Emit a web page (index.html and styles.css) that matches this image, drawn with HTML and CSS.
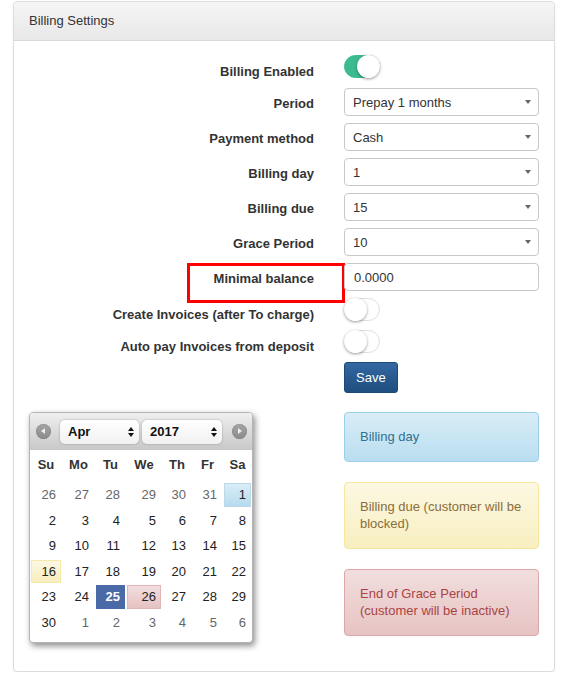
FILE: index.html
```html
<!DOCTYPE html>
<html>
<head>
<meta charset="utf-8">
<link rel="stylesheet" href="styles.css">
</head>
<body>
<div class="panel">
  <div class="panel-heading">Billing Settings</div>
  <div class="panel-body">
    <div class="form">
      <div class="row row-toggle first">
        <div class="label">Billing Enabled</div>
        <div class="ctrl"><span class="switch on"><span class="knob"></span></span></div>
      </div>
      <div class="row">
        <div class="label">Period</div>
        <div class="ctrl"><div class="select">Prepay 1 months<span class="caret"></span></div></div>
      </div>
      <div class="row">
        <div class="label">Payment method</div>
        <div class="ctrl"><div class="select">Cash<span class="caret"></span></div></div>
      </div>
      <div class="row">
        <div class="label">Billing day</div>
        <div class="ctrl"><div class="select">1<span class="caret"></span></div></div>
      </div>
      <div class="row">
        <div class="label">Billing due</div>
        <div class="ctrl"><div class="select">15<span class="caret"></span></div></div>
      </div>
      <div class="row">
        <div class="label">Grace Period</div>
        <div class="ctrl"><div class="select">10<span class="caret"></span></div></div>
      </div>
      <div class="row">
        <div class="label marked">Minimal balance</div>
        <div class="ctrl"><div class="input">0.0000</div></div>
      </div>
      <div class="row row-toggle tight">
        <div class="label">Create Invoices (after To charge)</div>
        <div class="ctrl"><span class="switch"><span class="knob"></span></span></div>
      </div>
      <div class="row row-toggle tight">
        <div class="label">Auto pay Invoices from deposit</div>
        <div class="ctrl"><span class="switch"><span class="knob"></span></span></div>
      </div>
      <div class="row row-btn">
        <div></div>
        <div class="ctrl"><span class="btn">Save</span></div>
      </div>
    </div>

    <div class="bottom">
      <div class="cal">
        <div class="cal-head">
          <span class="nav prev"></span>
          <span class="csel month">Apr<span class="updown"><svg width="6" height="10" viewBox="0 0 6 10"><path d="M3 0 L6 4 L0 4 Z M0 6 L6 6 L3 10 Z" fill="#111"/></svg></span></span>
          <span class="csel year">2017<span class="updown"><svg width="6" height="10" viewBox="0 0 6 10"><path d="M3 0 L6 4 L0 4 Z M0 6 L6 6 L3 10 Z" fill="#111"/></svg></span></span>
          <span class="nav next"></span>
        </div>
        <table class="cal-table">
          <colgroup>
            <col class="c32"><col class="c33"><col class="c31"><col class="c36"><col class="c30"><col class="c31"><col class="c29">
          </colgroup>
          <thead>
            <tr><th>Su</th><th>Mo</th><th>Tu</th><th>We</th><th>Th</th><th>Fr</th><th>Sa</th></tr>
          </thead>
          <tbody>
            <tr><td><a class="other">26</a></td><td><a class="other">27</a></td><td><a class="other">28</a></td><td><a class="other">29</a></td><td><a class="other">30</a></td><td><a class="other">31</a></td><td><a class="hl-blue">1</a></td></tr>
            <tr><td><a>2</a></td><td><a>3</a></td><td><a>4</a></td><td><a>5</a></td><td><a>6</a></td><td><a>7</a></td><td><a>8</a></td></tr>
            <tr><td><a>9</a></td><td><a>10</a></td><td><a>11</a></td><td><a>12</a></td><td><a>13</a></td><td><a>14</a></td><td><a>15</a></td></tr>
            <tr><td><a class="hl-yellow">16</a></td><td><a>17</a></td><td><a>18</a></td><td><a>19</a></td><td><a>20</a></td><td><a>21</a></td><td><a>22</a></td></tr>
            <tr><td><a>23</a></td><td><a>24</a></td><td><a class="hl-sel">25</a></td><td><a class="hl-red">26</a></td><td><a>27</a></td><td><a>28</a></td><td><a>29</a></td></tr>
            <tr><td><a>30</a></td><td><a class="other">1</a></td><td><a class="other">2</a></td><td><a class="other">3</a></td><td><a class="other">4</a></td><td><a class="other">5</a></td><td><a class="other">6</a></td></tr>
          </tbody>
        </table>
      </div>
      <div class="legend">
        <div class="alert info">Billing day</div>
        <div class="alert warning">Billing due (customer will be<br>blocked)</div>
        <div class="alert danger">End of Grace Period<br>(customer will be inactive)</div>
      </div>
    </div>
  </div>
</div>
</body>
</html>
```
FILE: styles.css
```css
* { box-sizing: border-box; }
html, body { margin: 0; padding: 0; background: #fff; }
body {
  font-family: "Liberation Sans", Arial, Helvetica, sans-serif;
  font-size: 13px;
  color: #333;
}
.panel {
  margin: 1px 6px 0 13px;
  border: 1px solid #dcdcdc;
  border-radius: 4px;
  box-shadow: 0 1px 2px rgba(0,0,0,.05);
  background: #fff;
}
.panel-heading {
  padding: 9px 15px;
  line-height: 20px;
  font-size: 13px;
  color: #333;
  background: linear-gradient(#f5f5f5, #e8e8e8);
  border-bottom: 1px solid #d8d8d8;
  border-radius: 3px 3px 0 0;
}
.panel-body {
  padding: 14px 15px 16px 15px;
}
.row {
  display: grid;
  grid-template-columns: 285px 1fr;
  column-gap: 30px;
  align-items: center;
  margin-bottom: 7px;
}
.row.first { margin-bottom: 6px; }
.row.tight { margin-bottom: 5px; }
.label {
  text-align: right;
  font-weight: bold;
  line-height: 20px;
  padding-top: 3px;
  color: #333;
  position: relative;
}
.row-toggle { align-items: start; }
.row-toggle .label { padding-top: 7px; }
.label.marked::after {
  content: "";
  position: absolute;
  left: 158px;
  top: -3px;
  width: 152px;
  height: 34px;
  border: 3px solid #ff0000;
}
.select, .input {
  position: relative;
  height: 28px;
  border: 1px solid #c8c8c8;
  border-radius: 4px;
  padding: 0 8px;
  line-height: 27px;
  font-size: 13px;
  color: #333;
  background: #fff;
}
.input { padding-left: 9px; }
.caret {
  position: absolute;
  right: 7px;
  top: 11px;
  width: 0; height: 0;
  border-left: 3.5px solid transparent;
  border-right: 3.5px solid transparent;
  border-top: 4px solid #666;
}
.switch {
  position: relative;
  display: block;
  width: 36px;
  height: 23px;
  border: 1px solid #dfdfdf;
  border-radius: 12px;
  background: #fff;
}
.switch .knob {
  position: absolute;
  top: -1px;
  left: -1px;
  width: 23px;
  height: 23px;
  border-radius: 50%;
  background: #fff;
  box-shadow: 0 1px 3px rgba(0,0,0,.4);
}
.switch.on {
  background: #3cbb92;
  border-color: #3cbb92;
}
.switch.on .knob { left: auto; right: -1px; }
.row-btn { margin-bottom: 0; }
.btn {
  display: inline-block;
  height: 31px;
  line-height: 29px;
  padding: 0 11px;
  color: #fff;
  font-size: 13px;
  border: 1px solid #1e4a78;
  border-radius: 3px;
  background: linear-gradient(#3268a2, #1f4d7e);
}
.bottom {
  display: grid;
  grid-template-columns: 285px 1fr;
  column-gap: 30px;
  align-items: start;
  margin-top: 19px;
}
.cal {
  width: 224px;
  border: 1px solid #b5b5b5;
  border-radius: 4px;
  background: #fff;
  box-shadow: 2px 3px 6px rgba(0,0,0,.45);
  padding-bottom: 6px;
}
.cal-head {
  display: flex;
  align-items: center;
  height: 37px;
  padding-left: 6px;
  background: linear-gradient(#efefef, #c8c8c8);
  border-radius: 3px 3px 0 0;
}
.nav {
  position: relative;
  width: 15px;
  height: 15px;
  border-radius: 50%;
  background: linear-gradient(#a5a5a5, #8a8a8a);
  box-shadow: inset 0 0 1px rgba(0,0,0,.4);
  flex: none;
}
.nav::after {
  content: "";
  position: absolute;
  top: 4px;
  width: 0; height: 0;
  border-top: 3.5px solid transparent;
  border-bottom: 3.5px solid transparent;
}
.nav.prev::after { left: 5px; border-right: 4px solid #eee; }
.nav.next::after { left: 6px; border-left: 4px solid #eee; }
.nav.prev { margin-right: 9px; }
.nav.next { margin-left: 10px; }
.csel {
  position: relative;
  display: block;
  height: 24px;
  line-height: 24px;
  padding-left: 8px;
  font-weight: bold;
  font-size: 13px;
  color: #111;
  border-radius: 5px;
  background: linear-gradient(#ffffff, #f1f1f1);
  box-shadow: 0 0 2px rgba(0,0,0,.35);
  flex: none;
}
.csel.month { width: 79px; margin-right: 3px; }
.csel.year { width: 80px; }
.updown {
  position: absolute;
  right: 5px;
  top: 7px;
  width: 6px;
  height: 10px;
  line-height: 0;
}
.cal-table {
  width: 222px;
  border-collapse: collapse;
  table-layout: fixed;
}
col.c32 { width: 32px; }
col.c33 { width: 33px; }
col.c31 { width: 31px; }
col.c36 { width: 36px; }
col.c30 { width: 30px; }
col.c29 { width: 29px; }
.cal-table th {
  height: 32px;
  padding: 0 0 3px 0;
  font-weight: bold;
  font-size: 13px;
  color: #333;
  text-align: center;
}
.cal-table td { padding: 1px; }
.cal-table a {
  display: block;
  text-align: right;
  padding: 3px 4px 3px 0;
  line-height: 15.6px;
  border: 1px solid transparent;
  color: #222;
  font-size: 13px;
}
.cal-table a.other { color: #666; }
.cal-table a.hl-blue {
  border-color: #bcd9ea;
  background: linear-gradient(#d9edf7, #b6dbee);
}
.cal-table a.hl-yellow {
  border-color: #f6eaa9;
  background: linear-gradient(#fcf8e3, #f7edbd);
}
.cal-table a.hl-red {
  border-color: #e2b5b5;
  background: linear-gradient(#f2dede, #e5c2c2);
}
.cal-table a.hl-sel {
  border-color: #4a69a7;
  background: #4a69a7;
  color: #fff;
  font-weight: bold;
}
.alert {
  padding: 15px;
  line-height: 17.5px;
  font-size: 13px;
  border: 1px solid;
  border-radius: 4px;
  margin-bottom: 20px;
}
.alert.info {
  color: #31708f;
  border-color: #9acfea;
  background: linear-gradient(#d9edf7, #b9def0);
}
.alert.warning {
  color: #8a6d3b;
  border-color: #f5e79e;
  background: linear-gradient(#fcf8e3, #f8efc0);
}
.alert.danger {
  color: #a94442;
  border-color: #dca7a7;
  background: linear-gradient(#f2dede, #e7c3c3);
  margin-bottom: 19px;
}
```
